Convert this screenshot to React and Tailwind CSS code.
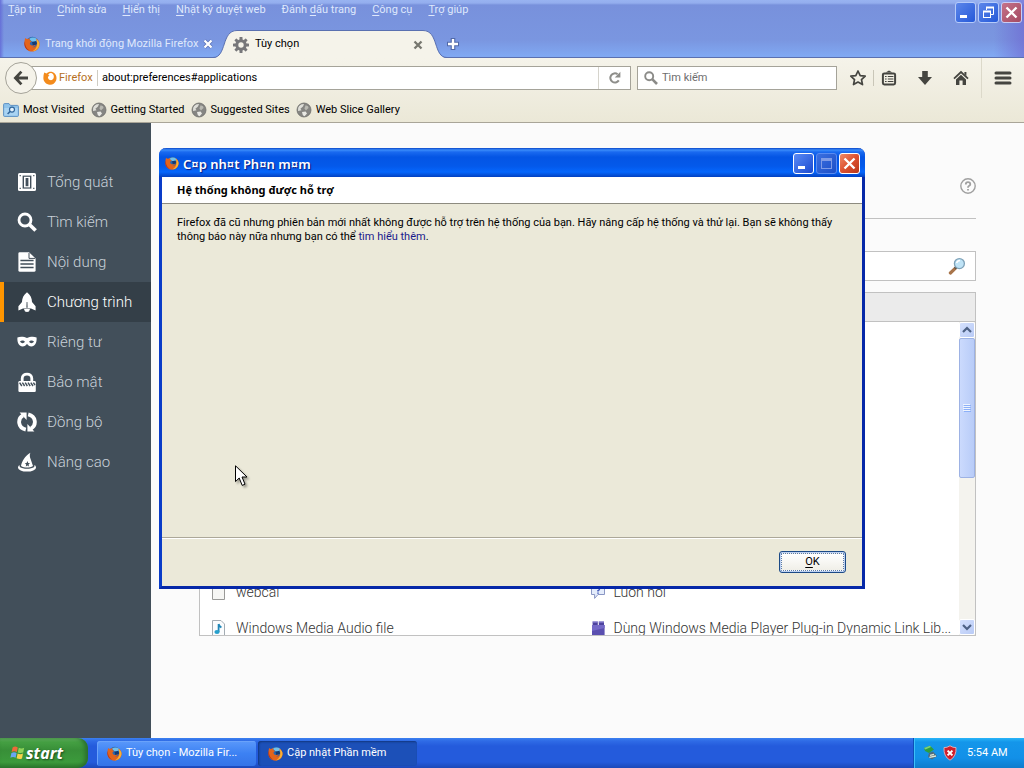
import React from "react";

function FirefoxIcon({ className }) {
  return (
    <svg viewBox="0 0 16 16" className={className} aria-hidden="true">
      <circle cx="8.4" cy="7" r="6.2" fill="#2c66ae" />
      <path d="M5 3 Q9 .2 13 3 L12 6.4 L8 5.6 Z" fill="#6fc0ec" />
      <path d="M8 6 L12 5 L13 8 L9 10 Z" fill="#163a70" />
      <path
        d="M1.2 2 C2 3 3 3.2 4 3 C4.6 2.4 5.4 2.2 6 2.2 C5.4 3 5.4 3.8 6 4.4 L7.6 5.2 L6.2 6.4 C5.6 7 5.8 8.6 7.2 9.2 C9 10 10.4 9 11.4 9 C11 10 9.6 11 8.4 11 C11 12 13.4 9.6 13 6 C12.8 4.6 12.6 3.6 12 2.6 C14.4 4 15.8 6 15.6 8.6 C15.2 13 12 15.6 8 15.6 C3.6 15.6 .4 12.2 .4 8 C.4 5.4 .8 3.6 1.2 2 Z"
        fill="#e3641c"
      />
      <path
        d="M12.4 3 C14.4 4.6 15.6 6.4 15.4 8.8 C15 12.4 12 15.2 8.4 15.2 C11.6 13.8 13.8 10 13 6 Z"
        fill="#f9b233"
      />
      <path d="M1 5 C.6 9 2 12.6 5.4 14.6 C1.6 13.6 .2 10 .5 7 Z" fill="#b32c17" />
    </svg>
  );
}

function IdentityIcon() {
  return (
    <svg viewBox="0 0 16 16" className="size-3.5 shrink-0" aria-hidden="true">
      <path
        fill="#f38b1c"
        fillRule="evenodd"
        d="M1.4 1.6 L4 2.8 C6.6.2 11 .2 13.4 2.8 C15.4 4.8 16 8 15 10.8 C13.6 14.2 10.8 15.8 7.8 15.6 C3.4 15.4 .4 12 .4 8 C.4 5.6 .8 3.4 1.4 1.6 Z M6 4.6 L7.4 5.2 L5.8 6.6 C5.4 8 6 9.6 8 10.4 C10 11 12.4 9.4 12.4 6.6 C12.4 4.8 11.4 3.2 10 2.6 C8 2 6.4 3 6 4.6 Z"
      />
    </svg>
  );
}

function GearIcon() {
  return (
    <svg viewBox="0 0 16 16" className="size-4" aria-hidden="true">
      <g fill="#77777a">
        <rect x="6.5" y="0" width="3" height="16" rx=".6" />
        <rect x="6.5" y="0" width="3" height="16" rx=".6" transform="rotate(45 8 8)" />
        <rect x="6.5" y="0" width="3" height="16" rx=".6" transform="rotate(90 8 8)" />
        <rect x="6.5" y="0" width="3" height="16" rx=".6" transform="rotate(135 8 8)" />
        <circle cx="8" cy="8" r="5.7" />
      </g>
      <circle cx="8" cy="8" r="2.7" fill="#f5f3ea" />
    </svg>
  );
}

function GlobeIcon() {
  return (
    <svg viewBox="0 0 16 16" className="size-4 shrink-0" aria-hidden="true">
      <circle cx="8" cy="8" r="7" fill="#858582" />
      <path d="M3 4 Q5 1.8 8 2 L7 4.6 L4.4 6.8 L5.6 8.2 L2 9 Q1.6 6 3 4 Z" fill="#deded8" />
      <path d="M9.6 3.2 L12 4.2 L12.6 6 L11.4 7 L10 8.4 L8.4 6.4 Z" fill="#b9b9b2" />
      <path d="M6 10 L9.6 9.6 L11 11.6 L8.4 14.4 L6.8 13 Z" fill="#e9e9e4" />
      <circle cx="8" cy="8" r="7" fill="none" stroke="#6f6f6c" strokeWidth=".8" />
    </svg>
  );
}

function FolderIcon() {
  return (
    <svg viewBox="0 0 16 16" className="size-4 shrink-0" aria-hidden="true">
      <path d="M.6 2.6 Q.6 1.6 1.6 1.6 L6 1.6 L7.4 3.4 L14.4 3.4 Q15.4 3.4 15.4 4.4 L15.4 13.6 Q15.4 14.4 14.6 14.4 L1.4 14.4 Q.6 14.4 .6 13.6 Z" fill="#8fc3ea" stroke="#5f92c4" />
      <path d="M1.4 6 H14.6 V13.6 H1.4 Z" fill="#a9d3f2" />
      <circle cx="9" cy="7.6" r="2.5" fill="#e3f2fd" stroke="#33679c" strokeWidth="1.2" />
      <path d="M7.2 9.4 L4.6 12" stroke="#33679c" strokeWidth="1.5" />
    </svg>
  );
}

function Cross({ color, outline }) {
  return (
    <svg viewBox="0 0 10 10" className="size-2.5" aria-hidden="true">
      {outline && <path d="M1.5 1.5 L8.5 8.5 M8.5 1.5 L1.5 8.5" stroke={outline} strokeWidth="3.8" />}
      <path d="M1.5 1.5 L8.5 8.5 M8.5 1.5 L1.5 8.5" stroke={color} strokeWidth="2.3" />
    </svg>
  );
}

const menus = [
  ["", "T", "ập tin"],
  ["", "C", "hỉnh sửa"],
  ["", "H", "iển thị"],
  ["", "N", "hật ký duyệt web"],
  ["Đánh ", "d", "ấu trang"],
  ["", "C", "ông cụ"],
  ["", "T", "rợ giúp"],
];

function WindowButton({ kind, label, faded }) {
  const base = "flex size-[21px] items-center justify-center rounded-[3px] border ";
  const tone =
    kind === "close"
      ? faded
        ? "border-[#c9cdf4] bg-linear-to-br from-[#c5728a] to-[#a44a62]"
        : "border-white bg-linear-to-br from-[#ef8a68] via-[#dd5130] to-[#b8371a]"
      : kind === "disabled"
        ? "border-[#5a8bf0] bg-linear-to-br from-[#3b6fe0] to-[#1d4fc8]"
        : faded
          ? "border-[#b5cbfa] bg-linear-to-br from-[#5c86ea] to-[#2458d8]"
          : "border-white bg-linear-to-br from-[#5a8af5] to-[#1c49d0]";
  return (
    <button type="button" aria-label={label} className={base + tone} disabled={kind === "disabled"}>
      <svg viewBox="0 0 19 19" className="size-[19px]" fill="none" aria-hidden="true">
        {kind === "min" && <path d="M4 13.5 H11" stroke="#fff" strokeWidth="3" />}
        {kind === "restore" && (
          <g stroke="#fff">
            <path d="M7.5 7 V4.5 H14.5 V11.5 H12" />
            <path d="M7 4.5 H15" strokeWidth="2" />
            <rect x="4.5" y="8.5" width="7" height="6" />
            <path d="M4 8.5 H12" strokeWidth="2" />
          </g>
        )}
        {kind === "disabled" && (
          <g stroke="#7f9be6">
            <rect x="4.5" y="4.5" width="10" height="10" />
            <path d="M4 5.5 H15" strokeWidth="3" />
          </g>
        )}
        {kind === "close" && <path d="M4.5 4.5 L14.5 14.5 M14.5 4.5 L4.5 14.5" stroke="#fff" strokeWidth="2.4" />}
      </svg>
    </button>
  );
}

function BrowserFrame() {
  return (
    <header className="border-b border-[#5a70b0] bg-[linear-gradient(90deg,#6670d8_0,transparent_4px,transparent_calc(100%-30px),#6d62cf99_100%),linear-gradient(180deg,#98b3f1_0,#94aeee_3px,#7891dc_5px,#7a96e0_40px,#80a8f2_56px)]">
      <div className="flex h-[30px] items-start justify-between">
        <nav aria-label="Menu" className="flex gap-4 pt-[2px] pl-2 text-[11px] leading-4 text-[#dfe8fc]">
          {menus.map(([a, k, b]) => (
            <button type="button" key={k + b} className="whitespace-pre">
              {a}
              <span className="underline underline-offset-2">{k}</span>
              {b}
            </button>
          ))}
        </nav>
        <div className="flex gap-[2px] pt-[2px] pr-[2px]">
          <WindowButton kind="min" label="Minimize" faded />
          <WindowButton kind="restore" label="Restore" faded />
          <WindowButton kind="close" label="Close" faded />
        </div>
      </div>
      <div className="-mb-px flex h-7 items-stretch text-[11px]">
        <div className="flex w-[213px] items-center pl-6 text-[#dfe8fc]">
          <FirefoxIcon className="size-4 shrink-0" />
          <span className="flex-1 pl-[5px] whitespace-nowrap">Trang khởi động Mozilla Firefox</span>
          <button type="button" aria-label="Close tab">
            <Cross color="#fff" outline="#5c73b8" />
          </button>
        </div>
        <svg viewBox="0 0 24 28" className="h-7 w-6 shrink-0" aria-hidden="true">
          <path d="M0 28 C14 28 8 0 24 .5 V28 Z" fill="#f5f3ea" />
          <path d="M0 27.5 C14 27.5 8 .5 24 .5" fill="none" stroke="#5a70b0" />
        </svg>
        <div className="flex w-[186px] items-center border-t border-[#5a70b0] bg-[#f5f3ea]">
          <span className="-ml-1">
            <GearIcon />
          </span>
          <span className="flex-1 pl-1.5 text-black">Tùy chọn</span>
          <button type="button" aria-label="Close tab">
            <Cross color="#77776f" />
          </button>
        </div>
        <svg viewBox="0 0 24 28" className="h-7 w-6 shrink-0" aria-hidden="true">
          <path d="M24 28 C10 28 16 0 0 .5 V28 Z" fill="#f5f3ea" />
          <path d="M24 27.5 C10 27.5 16 .5 0 .5" fill="none" stroke="#5a70b0" />
        </svg>
        <button type="button" aria-label="New tab" className="flex items-center">
          <svg viewBox="0 0 12 12" className="size-3" aria-hidden="true">
            <path d="M6 0 V12 M0 6 H12" stroke="#5068a8" strokeWidth="4.6" />
            <path d="M6 1 V11 M1 6 H11" stroke="#fff" strokeWidth="2.4" />
          </svg>
        </button>
      </div>
    </header>
  );
}

function Toolbar() {
  return (
    <div className="border-b border-[#a9a598] bg-linear-to-b from-[#f5f3ea] to-[#ebe8d7] text-[11px] text-black">
      <div className="flex h-10 items-center">
        <button
          type="button"
          aria-label="Back"
          className="z-10 ml-[5px] flex size-8 shrink-0 items-center justify-center rounded-full border border-[#a5a399] bg-[#f5f3ea]"
        >
          <svg viewBox="0 0 16 16" className="size-4" fill="none" stroke="#454540" strokeWidth="2.8" aria-hidden="true">
            <path d="M8.4 1.6 L2.4 8 L8.4 14.4 M2.4 8 H15" />
          </svg>
        </button>
        <div className="-ml-2 flex h-6 min-w-0 flex-1 items-center border border-[#a5a399] bg-white pl-[13px]">
          <IdentityIcon />
          <span className="w-10 pl-[2px] text-[#b5701e]">Firefox</span>
          <span className="h-4 w-px bg-[#cfcdc4]" />
          <input
            aria-label="Address"
            defaultValue="about:preferences#applications"
            className="min-w-0 flex-1 bg-transparent px-1 outline-none"
          />
          <button
            type="button"
            aria-label="Reload"
            className="flex h-full w-8 items-center justify-center border-l border-[#d6d4cc]"
          >
            <svg viewBox="0 0 14 14" className="size-3.5" aria-hidden="true">
              <path d="M10.8 9.4 A4.6 4.6 0 1 1 9.6 3.2" fill="none" stroke="#8e8e8a" strokeWidth="2" />
              <path d="M12.4 .8 V6.6 H6.8 Z" fill="#8e8e8a" />
            </svg>
          </button>
        </div>
        <div className="ml-[6px] flex h-6 w-[200px] items-center border border-[#a5a399] bg-white pl-[6px]">
          <svg viewBox="0 0 14 14" className="size-3.5" fill="none" stroke="#8b8b88" aria-hidden="true">
            <circle cx="5.2" cy="5.2" r="4" strokeWidth="1.9" />
            <path d="M8.2 8.2 L13 13" strokeWidth="2.6" />
          </svg>
          <input
            aria-label="Tìm kiếm"
            placeholder="Tìm kiếm"
            className="min-w-0 flex-1 bg-transparent px-1 outline-none placeholder:text-[#6d6d6d]"
          />
        </div>
        <div className="flex items-center self-stretch pl-3">
          <button type="button" aria-label="Bookmark">
            <svg viewBox="0 0 18 18" className="size-[18px]" aria-hidden="true">
              <path
                d="M9 2 L11.2 6.6 L16.2 7.2 L12.5 10.6 L13.5 15.6 L9 13.1 L4.5 15.6 L5.5 10.6 L1.8 7.2 L6.8 6.6 Z"
                fill="none"
                stroke="#454540"
                strokeWidth="1.7"
                strokeLinejoin="round"
              />
            </svg>
          </button>
          <span className="ml-[6px] h-4 w-px bg-[#c9c6b8]" />
          <button type="button" aria-label="Bookmarks list" className="ml-[7px]">
            <svg viewBox="0 0 16 16" className="size-4" aria-hidden="true">
              <path d="M4.6 2.6 L8 .6 L11.4 2.6" fill="#454540" />
              <rect x="1.9" y="3.4" width="12.2" height="11" rx="1.4" fill="none" stroke="#454540" strokeWidth="2" />
              <path d="M4 6.5 H5.6 M4 9 H5.6 M4 11.5 H5.6 M6.8 6.5 H12.4 M6.8 9 H12.4 M6.8 11.5 H12.4" stroke="#454540" strokeWidth="1.2" />
            </svg>
          </button>
          <button type="button" aria-label="Downloads" className="ml-5">
            <svg viewBox="0 0 16 16" className="size-4" fill="#454540" aria-hidden="true">
              <path d="M5.2 1 H10.8 V7 H15 L8 15 L1 7 H5.2 Z" />
            </svg>
          </button>
          <button type="button" aria-label="Home" className="ml-5">
            <svg viewBox="0 0 16 16" className="size-4" aria-hidden="true">
              <path d="M1 8.6 L8 2 L15 8.6" fill="none" stroke="#454540" strokeWidth="1.8" />
              <path d="M3 9.4 L8 4.8 L13 9.4 V15 H9.6 V10.6 H6.4 V15 H3 Z" fill="#454540" />
              <path d="M11.4 2 H13.4 V6 L11.4 4 Z" fill="#454540" />
            </svg>
          </button>
          <span className="ml-3 h-full w-px bg-[#dcd9ca]" />
          <button type="button" aria-label="Menu" className="mx-3">
            <svg viewBox="0 0 18 16" className="h-4 w-[18px]" aria-hidden="true">
              <path d="M2 3 H16 M2 8 H16 M2 13 H16" stroke="#454540" strokeWidth="3" strokeLinecap="round" />
            </svg>
          </button>
        </div>
      </div>
      <nav aria-label="Bookmarks" className="flex h-6 items-center gap-[6px] pl-[3px]">
        {["Most Visited", "Getting Started", "Suggested Sites", "Web Slice Gallery"].map((t, i) => (
          <a href="#bookmark" key={t} className="flex items-center gap-1 whitespace-nowrap">
            {i === 0 ? <FolderIcon /> : <GlobeIcon />}
            {t}
          </a>
        ))}
      </nav>
    </div>
  );
}

const categories = [
  {
    label: "Tổng quát",
    icon: (
      <>
        <rect x="1" y="1" width="18" height="18" rx="1.6" />
        <rect x="5.6" y="3.6" width="8.8" height="13" fill="#424f5a" />
        <rect x="7" y="4.8" width="6" height="10.6" />
        <rect x="8.6" y="6" width="2.8" height="8.2" fill="#424f5a" />
        <path d="M2.6 3h1.2v1.2h-1.2z M16.2 3h1.2v1.2h-1.2z M2.6 15.8h1.2v1.2h-1.2z M16.2 15.8h1.2v1.2h-1.2z" fill="#424f5a" />
      </>
    ),
  },
  {
    label: "Tìm kiếm",
    icon: (
      <g fill="none" stroke="currentColor">
        <circle cx="8" cy="8" r="6" strokeWidth="2.8" />
        <path d="M12.4 12.4 L18.6 18.6" strokeWidth="3.6" />
      </g>
    ),
  },
  {
    label: "Nội dung",
    icon: (
      <>
        <path d="M2.6 .2 H12 L18.6 6.4 V18.4 Q18.6 19.8 17 19.8 H3 Q1.4 19.8 1.4 18.4 V1.6 Q1.4 .2 2.6 .2 Z" />
        <path d="M12 1 V6.4 H18" stroke="#424f5a" strokeWidth="1" fill="none" />
        <path d="M3.4 8.5 H16.6 M3.4 12 H16.6 M3.4 15.5 H16.6" stroke="#424f5a" strokeWidth="1.5" fill="none" />
      </>
    ),
  },
  {
    label: "Chương trình",
    icon: (
      <>
        <path d="M10 .2 C13.6 2.8 15 6.6 15 10 L18.6 14.2 V18.4 L14 16.4 H6 L1.4 18.4 V14.2 L5 10 C5 6.6 6.4 2.8 10 .2 Z" />
        <path d="M7 17 H13 L12 19.6 L10 20 L8 19.6 Z" />
        <path d="M9.4 10 L10.6 10 L11 15.8 H9 Z" fill="#343f48" opacity=".6" />
      </>
    ),
  },
  {
    label: "Riêng tư",
    icon: (
      <path
        fillRule="evenodd"
        d="M.4 5.6 C3.6 4.2 7.4 5 10 6 C12.6 5 16.4 4.2 19.6 5.6 C20 11 17.8 14.6 14.4 14.6 C12.4 14.6 11 13 10 12 C9 13 7.6 14.6 5.6 14.6 C2.2 14.6 0 11 .4 5.6 Z M3 9.6 C4.4 11.6 6.8 11.6 8 9.8 C6.6 8 4.4 8 3 9.6 Z M17 9.6 C15.6 8 13.4 8 12 9.8 C13.2 11.6 15.6 11.6 17 9.6 Z"
      />
    ),
  },
  {
    label: "Bảo mật",
    icon: (
      <>
        <path d="M5.2 9 V6.4 C5.2 .6 14.8 .6 14.8 6.4 V9" fill="none" stroke="currentColor" strokeWidth="2.8" />
        <rect x="1.4" y="9" width="17.4" height="11" rx="1.2" />
        <path d="M2.6 10.6 L4.8 14 M5.4 10.6 L7.6 14 M8.2 10.6 L10.4 14 M11 10.6 L13.2 14 M13.8 10.6 L16 14 M16.4 10.6 L18 13.2" stroke="#424f5a" strokeWidth="1.4" />
      </>
    ),
  },
  {
    label: "Đồng bộ",
    icon: (
      <>
        <path d="M8.8 17.6 C.6 15.6 .4 6.6 6 3.4" fill="none" stroke="currentColor" strokeWidth="3.8" />
        <path d="M11.2 2.4 C19.4 4.4 19.6 13.4 14 16.6" fill="none" stroke="currentColor" strokeWidth="3.8" />
        <path d="M2.6 .4 H9.6 V8 Z M17.4 19.6 H10.4 V12 Z" />
      </>
    ),
  },
  {
    label: "Nâng cao",
    icon: (
      <>
        <path d="M13.4 .8 C12.4 3 12.8 5 13.6 7 L16 14 C12.4 16 7.4 16 4 14 C5 9 8 4 13.4 .8 Z" />
        <path d="M2.4 13 C-1.6 16.4 3.6 19.6 10 19.6 C16.4 19.6 21.6 16.4 17.6 13 L17.2 15 C14 17.4 6 17.4 2.8 15 Z" />
        <path d="M10.4 9 L11.2 11 L13 11.2 L11.6 12.6 L12 14.4 L10.4 13.4 L8.8 14.4 L9.2 12.6 L7.8 11.2 L9.6 11 Z" fill="#424f5a" />
      </>
    ),
  },
];

function Sidebar() {
  return (
    <nav aria-label="Categories" className="w-[151px] shrink-0 bg-[#424f5a] pt-[39px]">
      {categories.map(({ label, icon }) => {
        const active = label === "Chương trình";
        return (
          <a
            href="#category"
            key={label}
            aria-current={active ? "page" : undefined}
            className={
              "flex h-10 items-center gap-2.5 border-l-4 pl-[13px] text-[15px] font-light whitespace-nowrap " +
              (active ? "border-[#ff9500] bg-[#343f48] text-white" : "border-transparent text-[#c9d1d9]")
            }
          >
            <svg viewBox="0 0 20 20" className="size-5 shrink-0 text-white" fill="currentColor" aria-hidden="true">
              {icon}
            </svg>
            {label}
          </a>
        );
      })}
    </nav>
  );
}

const rows = [
  {
    type: "webcal",
    typeIcon: <path d="M2.5 1.5 H14.5 V15.5 H2.5 Z" fill="#f6f6f4" stroke="#9a9a98" />,
    action: "Luôn hỏi",
    actionIcon: (
      <>
        <path d="M1.5 1.5 H14.5 V10.5 H8 L4.6 14.4 V10.5 H1.5 Z" fill="#e4ecfb" stroke="#8a97c4" />
        <path d="M6.4 4.4 Q8 2.4 9.6 4.4 Q9.6 6 8 6.6 V7.6 M8 8.6 V9.8" fill="none" stroke="#3d55b8" strokeWidth="1.5" />
      </>
    ),
  },
  {
    type: "Windows Media Audio file",
    typeIcon: (
      <>
        <path d="M2.5 .5 H11 L14.5 4 V15.5 H2.5 Z" fill="#fbfcfd" stroke="#a3acb3" />
        <path d="M8.6 4 V12 M8.6 4 Q9.4 6.4 11.4 7.6" fill="none" stroke="#1f86b8" strokeWidth="1.8" />
        <ellipse cx="7" cy="12" rx="2.6" ry="2.1" fill="#27a0cc" />
      </>
    ),
    action: "Dùng Windows Media Player Plug-in Dynamic Link Lib...",
    actionIcon: (
      <>
        <path d="M2 5 H14.6 V16 H2 Z" fill="#5a4fb0" />
        <path d="M2 5 L14.6 5 L14.6 8 L2 11 Z" fill="#7469c8" />
        <path d="M2.6 1.6 H7.8 V5 H2.6 Z M8.8 1.6 H14 V5 H8.8 Z" fill="#4d429e" />
        <path d="M2.6 1.4 H7.8 V2.6 H2.6 Z M8.8 1.4 H14 V2.6 H8.8 Z" fill="#9d95e0" />
      </>
    ),
  },
];

function RowIcon({ children }) {
  return (
    <svg viewBox="0 0 16 16" className="size-4 shrink-0" aria-hidden="true">
      {children}
    </svg>
  );
}

function ScrollArrow({ label, d }) {
  return (
    <button
      type="button"
      aria-label={label}
      className="flex h-4 w-full shrink-0 items-center justify-center rounded-[2px] border border-white bg-linear-to-br from-[#d4e0fd] to-[#b9cbf6]"
    >
      <svg viewBox="0 0 10 8" className="h-2 w-2.5" fill="none" stroke="#4d6185" strokeWidth="2.2" aria-hidden="true">
        <path d={d} />
      </svg>
    </button>
  );
}

function Applications() {
  return (
    <main className="min-w-0 flex-1 bg-[#fbfbfb] px-12 pt-12">
      <div className="flex h-12 items-start justify-end border-b border-[#c1c1c1] pt-[7px]">
        <button type="button" aria-label="Help">
          <svg viewBox="0 0 16 16" className="size-4" fill="none" stroke="#a0a0a0" aria-hidden="true">
            <circle cx="8" cy="8" r="7.2" strokeWidth="1.4" />
            <path d="M5.8 6.4 Q5.8 4.2 8 4.2 Q10.3 4.2 10.3 6.2 Q10.3 7.4 8.9 8 Q8 8.5 8 9.8 M8 11 V12.6" strokeWidth="1.8" />
          </svg>
        </button>
      </div>
      <div className="mt-8 flex h-[30px] items-center border border-[#c1c1c1] bg-white pr-[9px]">
        <input aria-label="Search content types" className="min-w-0 flex-1 bg-transparent px-2 text-[14px] outline-none" />
        <svg viewBox="0 0 18 18" className="size-[18px]" aria-hidden="true">
          <path d="M8 10.6 L2.4 16" stroke="#a8744a" strokeWidth="3.2" strokeLinecap="round" />
          <path d="M8.4 10 L6.8 11.6" stroke="#5f5348" strokeWidth="2.4" />
          <circle cx="11.4" cy="6.6" r="5" fill="#bfe3f6" stroke="#7fa2b8" strokeWidth="1.3" />
          <path d="M8.6 6 Q9.4 3.6 12 3.6" fill="none" stroke="#fff" strokeWidth="1.5" />
        </svg>
      </div>
      <div className="mt-[11px] border border-[#c1c1c1] bg-white">
        <div className="h-[29px] border-b border-[#c1c1c1] bg-[#ebebeb]" />
        <div className="flex h-[313px] overflow-hidden">
          <div className="min-w-0 flex-1 pt-[252px]">
            <table className="w-full table-fixed text-[14px] font-light text-[#333]">
              <tbody>
                {rows.map((r) => (
                  <tr key={r.type} className="h-9">
                    <td className="w-1/2 pl-[10px]">
                      <span className="flex items-center gap-[10px] whitespace-nowrap">
                        <RowIcon>{r.typeIcon}</RowIcon>
                        {r.type}
                      </span>
                    </td>
                    <td className="w-1/2 pl-[10px]">
                      <span className="flex items-center gap-2 whitespace-nowrap">
                        <RowIcon>{r.actionIcon}</RowIcon>
                        {r.action}
                      </span>
                    </td>
                  </tr>
                ))}
              </tbody>
            </table>
          </div>
          <div className="flex w-4 flex-col bg-[#f4f3ee]">
            <ScrollArrow label="Scroll up" d="M1 6 L5 2 L9 6" />
            <div className="flex h-[140px] items-center justify-center rounded-[2px] border border-[#9db2e4] bg-linear-to-r from-[#cbdafd] to-[#b8ccf8]">
              <svg viewBox="0 0 8 8" className="size-2" aria-hidden="true">
                <path d="M0 .5 H7 M0 2.5 H7 M0 4.5 H7 M0 6.5 H7" stroke="#eef4fe" />
                <path d="M1 1.5 H8 M1 3.5 H8 M1 5.5 H8 M1 7.5 H8" stroke="#8cb0f8" />
              </svg>
            </div>
            <div className="flex-1" />
            <ScrollArrow label="Scroll down" d="M1 2 L5 6 L9 2" />
          </div>
        </div>
      </div>
    </main>
  );
}

function UpdateDialog() {
  return (
    <section
      role="dialog"
      aria-labelledby="dialog-heading"
      className="absolute top-[148px] left-[159px] flex h-[441px] w-[706px] flex-col rounded-t-[7px] border-[3px] border-t-0 border-[#0a3cc8] border-r-[#0628a8] border-b-[#0628a8] bg-[#ebe9d9] text-[11px] text-black"
    >
      <div className="-mx-[3px] flex h-[29px] shrink-0 items-center rounded-t-[7px] bg-[linear-gradient(180deg,#0a46c8_0,#3a8cfa_2px,#1a6af0_4px,#0455e4_9px,#0459ea_18px,#0566fc_24px,#0450d8_27px,#0340c0_29px)] pr-[5px] pl-[6px]">
        <FirefoxIcon className="size-[14px]" />
        <span className="flex-1 pt-[2px] pl-1 font-['Noto_Sans'] text-[13px] leading-5 font-semibold text-white [text-shadow:1px_1px_1px_#0a1883]">
          C¤p nh¤t Ph¤n m¤m
        </span>
        <div className="flex gap-[2px] pt-[2px]">
          <WindowButton kind="min" label="Minimize" />
          <WindowButton kind="disabled" label="Maximize" />
          <WindowButton kind="close" label="Close" />
        </div>
      </div>
      <h1
        id="dialog-heading"
        className="h-[27px] border-b border-[#8d8b80] bg-white pl-[15px] font-['Noto_Sans'] leading-[26px] font-bold"
      >
        Hệ thống không được hỗ trợ
      </h1>
      <p className="flex-1 px-[15px] pt-3 leading-[14px]">
        Firefox đã cũ nhưng phiên bản mới nhất không được hỗ trợ trên hệ thống của bạn. Hãy nâng cấp hệ thống và thử lại. Bạn sẽ không thấy thông báo này nữa nhưng bạn có thể{" "}
        <a href="#more" className="text-[#1a1a8c]">
          tìm hiểu thêm
        </a>
        .
      </p>
      <div className="flex h-[49px] items-center justify-end border-t border-[#aca899] pr-4 shadow-[inset_0_1px_0_#fff]">
        <button
          type="button"
          className="h-[22px] w-[67px] rounded-[3px] border border-[#1c4a86] bg-[#bcd0f2] p-px"
        >
          <span className="block h-full rounded-[1px] border border-dotted border-[#5a7ba8] bg-linear-to-b from-white to-[#f0efe8] leading-[16px]">
            <span className="underline underline-offset-2">O</span>K
          </span>
        </button>
      </div>
    </section>
  );
}

function Taskbar() {
  return (
    <footer className="flex h-[30px] shrink-0 items-stretch bg-[linear-gradient(180deg,#3a80f0_0,#2f6be6_3px,#245bdc_8px,#245bdc_24px,#1c48b8_30px)] text-[11px] text-white">
      <button
        type="button"
        className="flex w-[88px] items-center gap-1 rounded-r-[10px] bg-[linear-gradient(180deg,#6ab868_0,#45a043_4px,#388f38_12px,#3c9a3c_24px,#2b7a2c_30px)] pl-[10px] shadow-[inset_-3px_0_4px_#2a6e2c]"
      >
        <svg viewBox="0 0 16 16" className="size-4" aria-hidden="true">
          <path d="M2.6 2.4 Q5 .8 7.8 2.4 L6.8 7 Q4.2 5.6 1.6 7 Z" fill="#ee6a3a" />
          <path d="M8.8 2.8 Q11.4 4.2 14.2 2.8 L13.2 7.6 Q10.4 8.6 7.8 7.4 Z" fill="#8fd25a" />
          <path d="M1.4 8 Q4 6.6 6.6 8 L5.6 12.8 Q3 11.4 .4 12.8 Z" fill="#6aa6f4" />
          <path d="M7.6 8.4 Q10.2 9.8 13 8.6 L12 13.4 Q9.2 14.6 6.6 13.2 Z" fill="#f8d24a" />
        </svg>
        <span className="-ml-1 font-['Noto_Sans'] text-[16px] leading-5 font-bold italic [text-shadow:1px_1px_2px_#1a4a1c]">
          start
        </span>
      </button>
      <div className="flex flex-1 items-center gap-[2px] pl-[9px]">
        <button
          type="button"
          className="flex h-[25px] w-[159px] items-center gap-1 rounded-[3px] bg-linear-to-b from-[#5a98fa] via-[#3c81f3] to-[#3574e8] pl-[10px] whitespace-nowrap shadow-[inset_1px_1px_0_#6aa2fa]"
        >
          <FirefoxIcon className="size-[15px] shrink-0" />
          Tùy chọn - Mozilla Fir...
        </button>
        <button
          type="button"
          className="flex h-[25px] w-[159px] items-center gap-1 rounded-[3px] bg-[#1c50b8] pl-[10px] whitespace-nowrap shadow-[inset_1px_1px_2px_#12367e]"
        >
          <FirefoxIcon className="size-[15px] shrink-0" />
          Cập nhật Phần mềm
        </button>
      </div>
      <div className="flex w-[111px] items-center border-l border-[#0c4fb8] bg-[linear-gradient(180deg,#28b4f8_0,#1496ea_4px,#1290e8_20px,#0f7ccc_30px)] pl-[9px] shadow-[inset_1px_0_0_#3cc0fa]">
        <svg viewBox="0 0 16 16" className="size-4" aria-hidden="true">
          <path d="M1 3 L7 .8 L11 4.4 L6 8 L2 6 Z" fill="#2f9e3c" />
          <path d="M1 3 L7 .8 L8 2 L2.4 4.4 Z" fill="#7ed07a" />
          <path d="M6 8 L10 6.4 L14 11 L9 14.6 L5 12 Z" fill="#4f6b7c" />
          <path d="M7 10.4 L11 9.4 M6.4 12.4 L13 11" stroke="#dfe8d8" strokeWidth="1.4" />
        </svg>
        <svg viewBox="0 0 16 16" className="ml-[3px] size-4" aria-hidden="true">
          <path d="M8 .8 Q11 2.8 14 2.6 Q14.6 11.4 8 15.2 Q1.4 11.4 2 2.6 Q5 2.8 8 .8 Z" fill="#cf1f2c" stroke="#e8b4bc" strokeWidth=".9" />
          <path d="M5.6 5.6 L10.4 10.4 M10.4 5.6 L5.6 10.4" stroke="#fff" strokeWidth="2" />
        </svg>
        <span className="pl-[9px] whitespace-nowrap">5:54 AM</span>
      </div>
    </footer>
  );
}

function Pointer() {
  return (
    <svg viewBox="0 0 14 22" className="pointer-events-none absolute top-[465px] left-[235px] h-[22px] w-3.5 drop-shadow-[2px_2px_1px_#00000055]" aria-hidden="true">
      <path d="M.5 .8 V16.6 L4.2 13 L7.2 20.4 L10 19.2 L7 12 H12 Z" fill="#fff" stroke="#000" />
    </svg>
  );
}

export default function App() {
  return (
    <div className="relative flex min-h-screen flex-col overflow-hidden font-['Roboto','Noto_Sans',sans-serif]">
      <BrowserFrame />
      <Toolbar />
      <div className="flex flex-1">
        <Sidebar />
        <Applications />
      </div>
      <Taskbar />
      <UpdateDialog />
      <Pointer />
    </div>
  );
}
